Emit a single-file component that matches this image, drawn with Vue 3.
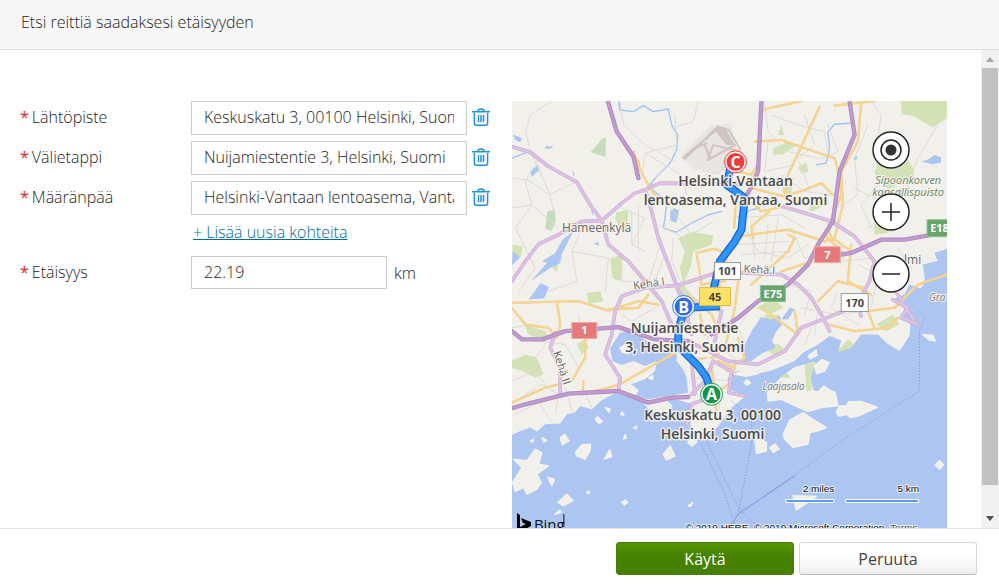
<script setup>
import { ref } from 'vue'

const stops = ref([
  { id: 'origin', label: 'Lähtöpiste', value: 'Keskuskatu 3, 00100 Helsinki, Suomi' },
  { id: 'via', label: 'Välietappi', value: 'Nuijamiestentie 3, Helsinki, Suomi' },
  { id: 'destination', label: 'Määränpää', value: 'Helsinki-Vantaan lentoasema, Vantaa, Suomi' }
])
const distance = ref('22.19')

// Map geometry, in thirds of a map unit
const sea = [
  'M20 1330V1022L45 1010 75 1000 95 1012 120 990 165 988 185 960 210 955 225 935 260 945 290 918 330 897 370 900 420 918 500 912 560 928 556 985 562 1035 600 1035 640 995 680 940 722 905 675 885 668 850 700 828 750 840 800 828 870 800 895 775 940 750 975 725 1010 738 1000 775 1040 760 1070 720 1120 720 1145 745 1185 770 1215 725 1218 690 1190 670 1200 640 1165 615 1200 600 1215 570 1250 582 1262 560 1255 510 1300 498 1290 475 1328 462V1330Z',
  'M315 762L345 715 380 708 400 702 415 735 450 750 480 765 515 775 515 800 535 825 545 850 550 895 430 915 390 905 402 888 378 870 420 855 450 830 455 800 420 815 385 800 350 812 322 800Z',
  'M715 762L740 710 768 668 800 675 825 662 832 690 812 715 802 740 812 760 775 775 740 800 715 800Z',
  'M76 560L125 505 110 500 150 475 172 435 205 408 170 478 165 505 135 520Z',
  'M22 118L50 130 45 142 30 135ZM116 160l12-10 4 12zM128 158l16-8-8 12zM74 230l24-20 6 14-24 22zM202 225l6 14-4 6zM258 345l8-6-4 24zM265 447l14-6 4 12zM496 350l12-10 14 8-8 36-18-6zM22 470l22 18-24 25zM70 615l36-50 25 12-14 35z',
  'M1250 200l20-5 20-15 20 8v15l-25 5zM830 675l25-35 15 4-20 30zM1045 190l14-8-4 15z'
]
const parks = [
  'M520 430L560 412 625 422 620 450 565 470 558 512 535 570 525 520 540 470Z',
  'M335 352L370 346 366 400 345 402 330 370Z', 'M315 492L352 478 350 560 322 552Z', 'M245 595l40-5 10 30-45 8z', 'M1190 18H1328V70L1285 98 1225 62 1192 58Z',
  'M1125 190L1160 175 1200 180 1230 225 1225 270 1190 260 1150 285 1110 235Z', 'M1110 365l48 20-10 30-38 5z', 'M805 160l45-20 25 10-40 28-30 2z', 'M880 218l25-15 6 28-20 4z', 'M820 120l10-30 8 30z',
  'M20 800L60 780 95 790 115 840 90 850 50 830 20 820Z', 'M22 450l30 5-5 30-25 20z', 'M60 690l60 20 15 25-40 0-30-20z', 'M215 748l20-10 15 20-20 22z', 'M755 640l50-30 30 30-40 20z', 'M460 810l20 0 0 60-15 5z',
  'M910 345l30-40 12 30-30 15z', 'M780 660l40 0-10 35-30-5z', 'M505 560l30 10 25 30-30 5z', 'M600 590l40 0 10 50-30 10z', 'M770 755l50-8 18 18-28 20z', 'M990 780l40-45 20 15-20 20z', 'M1090 775l35-5 12 40-45-20z', 'M1115 690l50-30 20 30-40 20z', 'M835 270l28 2-4 26-26-4z', 'M135 512l25-10-5 30z'
]
const islands = [
  'M870 820L930 805 915 850 925 890 940 893 958 875 972 885 992 895 1000 935 950 940 910 952 862 930 830 915 790 920 788 895 830 850Z',
  'M835 1022L855 978 895 955 925 975 965 1000 940 1010 915 1015 910 1050 865 1060 840 1035ZM750 1025l35 20v25l-30 8zM795 1060l16-10 12 15-17 10zM995 955l10-20 22-2 4-10 38-2 50 18-30 13-24 12-28 6-10-10-24 6z',
  'M930 815l22-20 22 10-14 25-24 8zM690 840l30-14 40 12-35 8zM718 865l8-8 12 8-12 8zM910 785l25-18 2 16-20 10zM865 1205l70 2-60 41zM1292 1113l14-14 12 13-12 13zM1255 720l30 2 8 18-20-4z',
  'M210 1075L230 1052 256 1050 255 1070 240 1095 215 1085ZM25 1095L65 1100 90 1065 110 1075 100 1110 130 1115 95 1140 108 1165 95 1185 65 1200 55 1180 30 1192 22 1165 50 1120ZM158 1225L185 1200 204 1220 175 1235Z',
  'M475 1080l20-25 15 30-25 12zM165 1030l14-10 12 20-20 12zM298 1095l16-28 6 20zM128 1150l20 5-8 20zM420 930l60-15 20 20-15 25-45-10zM548 1045l12-15 16 12-14 14zM270 975l8-8 14 15-10 6zM355 1035l5-14 4 10zM300 940l14 4-2 10zM346 960l5-7 6 10zM385 1000l10-4-2 8zM350 1225l10-8 8 8-10 8zM550 1235l14-10-6 12zM244 1196l7-6 3 8zM148 1262l16-14 4 6zM110 1030l14 8-8 6zM75 1040l10-4-2 8zM345 760l20-12 18 10-12 20-20-5zM430 850l14-6-2 12z'
]
const minorRoads = [
  'M140 18L75 60 60 110 75 165 100 190', 'M20 250L70 255 130 300 205 265', 'M100 190L60 260 80 330 30 400 60 460', 'M75 165L130 290 150 360', 'M20 340L80 330 160 400', 'M230 400L200 470 215 560 130 590', 'M60 460L90 520 40 590', 'M200 470L310 490 300 590', 'M345 18L355 90 420 150 510 200', 'M510 60L515 150 420 175 410 250', 'M420 175L530 240 545 300', 'M450 250L490 210', 'M580 18L565 80 500 100', 'M350 340L420 370 380 450 420 470', 'M380 350V450M400 330V470', 'M430 300L490 330 560 420 625 380', 'M460 390L540 430 550 500', 'M470 440L430 560 350 560', 'M480 480L450 560M505 430L500 500 540 590', 'M690 180L640 235 600 240', 'M20 700L80 690 120 750 60 830', 'M90 705L110 740 180 750 220 820', 'M60 900L110 870 160 900 150 960', 'M120 870L90 830 20 860', 'M30 960L100 925 140 985', 'M180 880L200 950M240 900L260 940', 'M220 660L230 740', 'M250 740L230 700 310 700M350 660L380 680 450 640', 'M780 30L790 110 850 170 940 190', 'M800 60L880 90 960 110 970 180', 'M790 140L780 230 870 210', 'M900 60L930 150 880 190 920 300', 'M970 90L1000 170 950 190', 'M830 240L900 290 980 300', 'M750 240L790 270 870 250', 'M1100 20L1130 60 1120 130 1180 190 1160 350 1090 400', 'M1090 90L1050 190 1060 300 1000 340', 'M1050 280L1130 320 1200 300 1240 190 1300 90', 'M1140 250L1070 330 1100 400', 'M700 370L830 360 900 400', 'M720 400L760 470 850 490 910 450', 'M740 380L750 490M790 390L780 490M820 370L800 500', 'M700 450L850 440M710 480L860 470', 'M860 400L900 490 980 470', 'M1000 450L1020 500 1100 490', 'M1060 510L1120 540 1100 640', 'M1180 460L1220 520 1160 560', 'M850 570L920 590 900 660', 'M890 640L1000 660 1080 650', 'M920 700L900 750M940 640L930 720', 'M560 600L600 640 650 620', 'M620 700L600 760 650 790', 'M660 700L620 740 700 800', 'M570 790L640 790 680 820', 'M600 860L650 890 640 960', 'M560 850L680 860', 'M740 640L700 700 720 750', 'M1000 590L980 640 1060 690'
]
const streams = [
  'M340 18L345 45 385 50 415 32 445 50 490 42 500 90 518 120 515 165 495 205 455 245 430 275', 'M430 275L485 320 480 370 475 400 515 412 560 385 610 360 650 350', 'M1035 85L990 88 970 110 975 160 965 205 935 210', 'M20 190L70 170', 'M700 365L740 345 765 340'
]
const yellowRoads = [
  'M20 625L130 622 220 620 310 648 400 620 460 630', 'M155 622L165 690 155 730', 'M20 640L60 690 130 700 155 730', 'M240 715L240 790 200 860 120 880 20 925', 'M235 860L232 900 345 870 440 815 520 770', 'M250 700L240 740M310 645L400 640 430 600', 'M385 170L400 215 430 270 455 310',
  'M575 475L630 462 665 480 660 560', 'M575 475L590 570 660 560', 'M770 45L890 18', 'M750 140L830 135 900 160 990 190 1005 240 1010 300 970 400 985 440', 'M945 35L890 155 850 240 840 310', 'M740 280L840 305 900 285 950 265 985 300', 'M1070 25L1060 140 1010 230 1015 330 990 430', 'M990 32L1110 18', 'M715 300L770 350 840 335', 'M700 425L850 405 960 440 985 430 1040 470', 'M745 430L740 395 795 350', 'M850 420L870 430 850 470 740 570', 'M1040 450L1030 560 1100 600', 'M940 620L1000 560 1080 580 1090 650 1110 700', 'M1090 650L1170 640 1240 570 1328 540', 'M870 650L880 720 770 640', 'M970 690L1050 710 1150 700 1180 670', 'M1020 480L960 420M830 530L920 500',
  'M690 180L700 230 740 240 760 210M688 400L695 300M700 560L690 640 660 760 620 790', 'M550 600L620 660 640 710', 'M640 560L660 610 640 650', 'M640 800L690 820 670 870 630 900', 'M665 830L720 790 700 730', 'M585 660L600 720M620 810L635 960', 'M540 760L570 800 600 790'
]
const pinkRoads = [
  'M20 155L75 172 130 215 215 262 255 330 290 378', 'M20 560L60 500 100 448 160 420 230 380 290 378 350 325 390 295 420 285 465 265 700 268', 'M290 378L310 450 370 500 420 560 470 620 500 690 560 800 570 900', 'M420 285L440 350 460 430 510 560 540 640 560 720', 'M330 650L350 605 420 580 520 572 640 533 710 535', 'M330 650L320 720 300 780 345 850 340 890', 'M150 715L135 760 165 820 165 895', 'M710 535L830 540 880 570 920 610 950 660 975 710', 'M835 335L900 355 980 380 1050 425 1110 500 1095 560 1060 630 980 665 890 700 840 770 760 810 670 800 550 740', 'M1110 500L1180 600 1230 680', 'M560 900L600 860 625 800 680 830 672 895 720 905', 'M545 990L560 930 640 900', 'M530 600L550 680M650 650L630 740', 'M1165 615L1210 640 1190 670 1240 690', 'M1060 630L1070 665'
]
const motorways = [
  'M308 18L335 110 385 185 400 250', 'M770 18L765 120 760 230 740 275 710 330', 'M1035 18L1050 120 1005 230 985 380 940 450 910 510 850 570 760 620 700 670 620 720', 'M1010 480L1040 475 1130 435 1200 435 1328 412', 'M20 710L50 735 110 735 180 710 340 698 450 735 550 740', 'M20 942L60 930 190 898 340 890 430 925 500 910 550 908'
]
const ferries = ['M1245 650L1262 670 1245 710V890L1010 1040 860 1150 700 1260 680 1290', 'M580 1030L660 1200 690 1290M600 1030L700 1240 760 1300', 'M680 920L740 970 742 1040 700 1260']

const places = [
  { x: 50, y: 131, t: 'Hämeenkylä', c: 'town' },
  { x: 122, y: 189, t: 'Kehä I', c: 'road', r: -8 },
  { x: 232, y: 172, t: 'Kehä I', c: 'road', r: 3 },
  { x: 41, y: 252, t: 'Kehä II', c: 'road', r: 72 },
  { x: 364, y: 83, t: 'Sipoonkorven', c: 'park' },
  { x: 361, y: 95, t: 'kansallispuisto', c: 'park' },
  { x: 393, y: 163, t: 'lmi', c: 'town' },
  { x: 418, y: 200, t: 'Gra', c: 'isle' },
  { x: 251, y: 290, t: 'Laajasalo', c: 'isle' }
]

const shields = [
  { x: 303, y: 146, w: 26, h: 16, t: '7', c: 'red' },
  { x: 60, y: 222, w: 25, h: 16, t: '1', c: 'red' },
  { x: 249, y: 185, w: 25, h: 16, t: 'E75', c: 'green' },
  { x: 416, y: 119, w: 25, h: 17, t: 'E18', c: 'green' },
  { x: 203, y: 162, w: 26, h: 17, t: '101', c: 'white' },
  { x: 330, y: 193, w: 27, h: 18, t: '170', c: 'white' },
  { x: 188, y: 187, w: 31, h: 18, t: '45', c: 'yellow' }
]

const pins = [
  { x: 200, y: 294, t: 'A', fill: '#159647' },
  { x: 172, y: 206, t: 'B', fill: '#2a6cf0' },
  { x: 224, y: 61, t: 'C', fill: '#ee3a39' }
]

const captions = [
  { x: 224, y: 85, t: 'Helsinki-Vantaan' },
  { x: 224, y: 104, t: 'lentoasema, Vantaa, Suomi' },
  { x: 173, y: 233, t: 'Nuijamiestentie' },
  { x: 173, y: 252, t: '3, Helsinki, Suomi' },
  { x: 201, y: 320, t: 'Keskuskatu 3, 00100' },
  { x: 201, y: 339, t: 'Helsinki, Suomi' }
]

function removeStop(id) {
  stops.value = stops.value.filter((s) => s.id !== id)
}
function addStop() {
  stops.value.push({ id: 'stop' + Date.now(), label: 'Välietappi', value: '' })
}
</script>

<template>
  <div class="dialog">
    <header class="head"><h1>Etsi reittiä saadaksesi etäisyyden</h1></header>

    <div class="middle">
      <main class="body">
        <form class="form" @submit.prevent>
          <div v-for="s in stops" :key="s.id" class="row">
            <label :for="s.id"><span class="req">*</span>{{ s.label }}</label>
            <input :id="s.id" v-model="s.value" class="field" type="text" />
            <button class="trash" type="button" aria-label="Poista" @click="removeStop(s.id)">
              <svg viewBox="0 0 18 18" width="18" height="18" fill="none" stroke="#1f93de" stroke-width="1.5">
                <path d="M0 4.500V3.700H18V4.500" />
                <path d="M5.800 3.500C6 1.700 7 .9 9 .9s3 .8 3.200 2.600" />
                <path d="M2.400 5v10.200c0 1.300.6 2 1.900 2h9.400c1.300 0 1.900-.7 1.900-2V5" />
                <path d="M6.500 7v7M9 7v7M11.500 7v7" />
              </svg>
            </button>
          </div>
          <div class="row add"><a href="#" @click.prevent="addStop">+ Lisää uusia kohteita</a></div>
          <div class="row total">
            <label for="distance"><span class="req">*</span>Etäisyys</label>
            <input id="distance" v-model="distance" class="field short" type="text" />
            <span class="unit">km</span>
          </div>
        </form>

        <section class="map" aria-label="Kartta">
          <svg class="canvas" viewBox="0 0 436 436" preserveAspectRatio="xMidYMin slice">
            <rect width="436" height="436" fill="#f2f0eb" />
            <g transform="scale(.33333) translate(-20 -18)" fill="none" stroke-linejoin="round" stroke-linecap="round">
              <path d="M525 185L620 90 680 85 700 200 640 240 570 225Z" fill="#e8e5e2" />
              <path v-for="d in parks" :key="d" :d="d" fill="#d2e2b4" />
              <path d="M256 172L290 132 302 128 301 186ZM126 350L148 346 152 376 140 408 120 404Z" fill="#c4dbbc" />
              <path v-for="d in sea" :key="d" :d="d" fill="#adc6f1" />
              <path v-for="d in islands" :key="d" :d="d" fill="#f2f0eb" stroke="#f4f3ec" stroke-width="4" />
              <path d="M900 810L930 805 918 850 922 885 905 892ZM825 850L845 835 858 850Z" fill="#d2e2b4" />
              <path v-for="d in streams" :key="d" :d="d" stroke="#9fc3f3" stroke-width="4" />
              <path v-for="d in minorRoads" :key="d" :d="d" stroke="#dddbd7" stroke-width="3" />
              <path d="M535 188L635 105M610 195L690 150M600 150L615 190" stroke="#d1c5c1" stroke-width="7" />
              <path d="M540 192L625 108 640 95 672 105 705 160 712 190 688 165 625 150 610 190M560 165L605 145" stroke="#d1c5c1" stroke-width="6" />
              <path d="M625 100L660 98 690 150 665 150Z" fill="#d1c5c1" />
              <path d="M380 175L402 195 408 220 395 235ZM690 165l10-4v35h-10z" fill="#f5cd7c" />
              <path v-for="d in yellowRoads" :key="'c' + d" :d="d" stroke="#edc88a" stroke-width="7" />
              <path v-for="d in yellowRoads" :key="d" :d="d" stroke="#f8d68f" stroke-width="5" />
              <path v-for="d in pinkRoads" :key="'c' + d" :d="d" stroke="#c8a9cf" stroke-width="11" />
              <path v-for="d in pinkRoads" :key="d" :d="d" stroke="#dcc1e4" stroke-width="8" />
              <path v-for="d in motorways" :key="'c' + d" :d="d" stroke="#ad88bd" stroke-width="13" />
              <path v-for="d in motorways" :key="d" :d="d" stroke="#c09bd0" stroke-width="8" />
              <path v-for="d in ferries" :key="d" :d="d" stroke="#7f9de0" stroke-width="3" stroke-dasharray="4 5" stroke-linecap="butt" />
              <path d="M870 1145L700 1260 680 1290" stroke="#8ba6e6" stroke-width="4" />
              <path class="route-edge" d="M620 900L605 850 580 815 540 775 520 755 520 705 540 640 645 635M625 590L645 500 690 440 710 405 720 310 690 288 665 270 680 205" />
              <path class="route" d="M620 900L605 850 580 815 540 775 520 755 520 705 540 640 645 635M625 590L645 500 690 440 710 405 720 310 690 288 665 270 680 205" />
            </g>

            <text v-for="p in places" :key="p.t + p.x" :x="p.x" :y="p.y" :class="p.c" :transform="p.r ? `rotate(${p.r} ${p.x} ${p.y})` : null">{{ p.t }}</text>

            <g v-for="s in shields" :key="s.t" :class="['shield', s.c]">
              <rect :x="s.x" :y="s.y" :width="s.w" :height="s.h" />
              <text :x="s.x + s.w / 2" :y="s.y + s.h / 2 + 4">{{ s.t }}</text>
            </g>

            <g v-for="p in pins" :key="p.t" class="pin">
              <circle :cx="p.x" :cy="p.y" r="11" fill="#fff" :stroke="p.fill" />
              <circle :cx="p.x" :cy="p.y" r="9" :fill="p.fill" />
              <text :x="p.x" :y="p.y + 6">{{ p.t }}</text>
            </g>

            <text v-for="c in captions" :key="c.t" class="caption" :x="c.x" :y="c.y">{{ c.t }}</text>

            <path d="M5 413l3 2v12l6-3-3-1-2-5 10 4v4l-11 6-3-2z" />
            <path d="M52 414v13" stroke="#111" />
            <text class="brand" x="22" y="430">Bing</text>
            <g class="scale">
              <text x="323" y="392">2 miles</text>
              <text x="408" y="392">5 km</text>
              <path class="bar-edge" d="M274 401h49M334 401h74" />
              <path class="bar" d="M275 401h47M335 401h72" />
            </g>
            <text class="legal" x="174" y="431">© 2019 HERE, © 2019 Microsoft Corporation</text>
            <text class="legal terms" x="379" y="431">Terms</text>
          </svg>

          <div class="controls">
            <button type="button" aria-label="Paikanna">
              <svg viewBox="0 0 38 38"><circle cx="19" cy="19" r="18" /><circle cx="19" cy="19" r="10" /><circle class="dot" cx="19" cy="19" r="5.500" /></svg>
            </button>
            <button type="button" aria-label="Lähennä">
              <svg viewBox="0 0 38 38"><circle cx="19" cy="19" r="18" /><path d="M10 19h18M19 10v18" /></svg>
            </button>
            <button type="button" aria-label="Loitonna">
              <svg viewBox="0 0 38 38"><circle cx="19" cy="19" r="18" /><path d="M10 19h18" /></svg>
            </button>
          </div>
        </section>
      </main>

      <div class="scrollbar" aria-hidden="true">
        <svg viewBox="0 0 18 18" width="18" height="18"><path d="M5 12l4-5 4 5z" fill="#a3a3a3" /></svg>
        <span class="thumb"></span>
        <svg viewBox="0 0 18 18" width="18" height="18"><path d="M5 6h8l-4 5z" fill="#505050" /></svg>
      </div>
    </div>

    <footer class="foot">
      <button class="btn primary" type="button">Käytä</button>
      <button class="btn" type="button">Peruuta</button>
    </footer>
  </div>
</template>

<style>
body { margin: 0; background: #fff; }
</style>

<style scoped>
* { box-sizing: border-box; }
.dialog {
  display: flex;
  flex-direction: column;
  height: 100vh;
  color: #1c1c1c;
  font: 300 16px/24px "Open Sans", "Noto Sans", sans-serif;
}
.head {
  flex: none;
  padding: 10px 21px 15px;
  background: #f7f7f7;
  border-bottom: 1px solid #ddd;
}
h1 { margin: 0; font-size: 16px; line-height: 24px; font-weight: 300; }
.middle { flex: 1; min-height: 0; display: flex; }
.body {
  flex: 1;
  min-width: 0;
  display: flex;
  align-items: flex-start;
  gap: 22px;
  padding: 51px 34px 0 20px;
  overflow-y: auto;
  scrollbar-width: none;
}
.form { flex: none; display: flex; flex-direction: column; gap: 6px; }
.row { display: flex; align-items: center; }
label { width: 171px; padding-bottom: 2px; }
.req { margin-right: 3px; color: #d22; font-weight: 400; }
.field {
  width: 276px;
  height: 34px;
  padding: 0 12px 2px;
  border: 1px solid #ccc;
  border-radius: 0;
  background: #fff;
  color: inherit;
  font: inherit;
  outline: none;
}
.short { width: 196px; height: 33px; padding-bottom: 1px; }
.trash { display: flex; margin-left: 5px; padding: 0 0 2px; border: 0; background: none; cursor: pointer; }
.add { padding: 0 0 2px 173px; height: 23px; }
.add a { color: #0069ad; }
.total { padding-top: 6px; }
.unit { margin-left: 7px; }

.map { position: relative; flex: 1; min-width: 0; }
.canvas { display: block; width: 100%; height: auto; font-family: "Open Sans", "Noto Sans", sans-serif; font-weight: 400; }
.route-edge { stroke: #1766d8; stroke-width: 24; stroke-linecap: butt; }
.route { stroke: #2f95fb; stroke-width: 16; stroke-linecap: butt; }
.town, .road, .park, .isle, .caption { paint-order: stroke; stroke: #f6f4f0; stroke-width: 2px; stroke-linejoin: round; }
.town { font-size: 12px; fill: #666; }
.road { font-size: 11px; fill: #666; }
.park { font-size: 11px; font-style: italic; fill: #66876a; }
.isle { font-size: 10px; font-style: italic; fill: #777; }
.caption { font-size: 14px; font-weight: 600; text-anchor: middle; fill: #4a4a4a; stroke-width: 3px; stroke-opacity: .8; }
.shield text { font-size: 11px; font-weight: 700; text-anchor: middle; fill: #fff; }
.shield rect { stroke-width: 1px; }
.red rect { fill: #e57878; stroke: #eaa; }
.green rect { fill: #66a56b; stroke: #8cbf90; }
.white rect { fill: #fff; stroke: #999; }
.yellow rect { fill: #ffe066; stroke: #e0b93c; }
.shield.white text, .shield.yellow text { fill: #444; }
.pin text { font-size: 16px; font-weight: 700; text-anchor: middle; fill: #fff; }
.pin circle { stroke-width: 1px; }
.brand { font-size: 15px; fill: #111; }
.scale text, .legal { font-family: "Liberation Sans", Arial, sans-serif; font-size: 10px; fill: #111; paint-order: stroke; stroke: #fff; stroke-width: 2px; stroke-opacity: .7; }
.scale text { text-anchor: end; }
.legal.terms { fill: #555; }
.scale .bar-edge { stroke: #fff; stroke-width: 4px; }
.scale .bar { stroke: #5b9cf0; stroke-width: 2px; }

.controls { position: absolute; top: 30px; right: 37px; display: flex; flex-direction: column; gap: 24px; }
.controls button { width: 38px; height: 38px; padding: 0; border: 0; border-radius: 50%; background: #fff; cursor: pointer; }
.controls svg { display: block; width: 38px; height: 38px; fill: none; stroke: #222; stroke-width: 1.5px; }
.controls .dot { fill: #333; stroke: none; }

.scrollbar { flex: none; width: 18px; display: flex; flex-direction: column; background: #f1f1f1; }
.scrollbar svg { flex: none; }
.thumb { flex: 1; margin: 0 1px 25px; background: #c1c1c1; }

.foot {
  flex: none;
  display: flex;
  justify-content: flex-end;
  gap: 5px;
  padding: 13px 22px 9px;
  border-top: 1px solid #e5e5e5;
  background: #fff;
}
.btn {
  width: 178px;
  height: 33px;
  padding: 0;
  border: 1px solid #d5d5d5;
  border-bottom-color: #bbb;
  border-radius: 3px;
  background: linear-gradient(#fff 40%, #eee);
  color: #444;
  font: inherit;
  font-weight: 400;
  cursor: pointer;
}
.primary { border-color: #458000; background: linear-gradient(#549500, #458000 45%); color: #fff; }
</style>
